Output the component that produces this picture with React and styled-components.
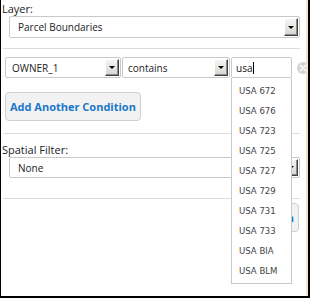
import React from 'react'
import styled, { createGlobalStyle } from 'styled-components'

const GlobalStyle = createGlobalStyle`
    html, body {
        margin: 0;
        padding: 0;
        background: #000;
    }
    body {
        font-family: "Open Sans", "DejaVu Sans", sans-serif;
    }
`

const Frame = styled.div`
    width: 310px;
    height: 298px;
    box-sizing: border-box;
    display: flex;
    border-left: 1px solid #000;
    border-right: 2px solid #000;
    border-bottom: 2px solid #000;
    background: #fff;
    overflow: hidden;
`

const Panel = styled.div`
    flex: 1;
    min-width: 0;
    position: relative;
    padding: 2px 6px 0 1px;
    display: flex;
    flex-direction: column;
    overflow: hidden;
`

const MapStrip = styled.div`
    width: 2px;
    flex-shrink: 0;
    background: linear-gradient(#f4ead0, #f1dcc0 40%, #f5e9d3);
`

const Label = styled.div`
    font-size: 11px;
    line-height: 14px;
    color: #222;
    height: 14px;
    margin-top: ${p => p.$mt || 0}px;
`

const Separator = styled.div`
    height: 1px;
    background: #dcdcdc;
    margin: ${p => p.$mt || 0}px 0 0 1px;
`

const SelectBox = styled.div`
    box-sizing: border-box;
    flex-shrink: 0;
    height: ${p => p.$h || 22}px;
    width: ${p => p.$w ? p.$w + 'px' : 'auto'};
    margin-left: ${p => p.$ml || 0}px;
    border: 1px solid #c9c9c9;
    border-radius: 2px;
    background: #fff;
    display: flex;
    align-items: center;
    padding: 0 1px 0 ${p => p.$pl || 8}px;
    font-size: 10px;
    color: #222;
`

const SelectText = styled.span`
    flex: 1;
    white-space: nowrap;
    overflow: hidden;
`

const ArrowButton = styled.div`
    box-sizing: border-box;
    width: 14px;
    height: calc(100% - 2px);
    background: linear-gradient(#f4f4f4, #d6d6d0);
    border: 1px solid;
    border-color: #fff #404040 #404040 #fff;
    box-shadow: inset -1px -1px 0 #8c8c8c;
    display: flex;
    align-items: center;
    justify-content: center;

    &::after {
        content: '';
        border-left: 3px solid transparent;
        border-right: 3px solid transparent;
        border-top: 3px solid #000;
    }
`

const Row = styled.div`
    display: flex;
    align-items: center;
    margin: ${p => p.$mt || 0}px 0 0 ${p => p.$ml || 0}px;
`

const InputWrap = styled.div`
    position: relative;
    flex-shrink: 0;
    margin-left: 1px;
`

const TextBox = styled.div`
    box-sizing: border-box;
    width: 61px;
    height: 21px;
    border: 1px solid #c9c9c9;
    border-radius: 2px;
    display: flex;
    align-items: center;
    padding-left: 4px;
    font-size: 10px;
    color: #111;
`

const Caret = styled.span`
    display: inline-block;
    width: 1px;
    height: 12px;
    background: #000;
    margin-left: 1px;
`

const ClearIcon = styled.div`
    flex-shrink: 0;
    width: 12px;
    height: 12px;
    border-radius: 50%;
    background: #d3d3d3;
    margin-left: 5px;
    display: flex;
    align-items: center;
    justify-content: center;
`

const Suggestions = styled.ul`
    position: absolute;
    top: 21px;
    left: 0;
    width: 61px;
    box-sizing: border-box;
    margin: 0;
    padding: 3px 0 2px;
    list-style: none;
    background: #fff;
    border: 1px solid #c9c9c9;
    border-top: none;
    z-index: 2;
`

const Suggestion = styled.li`
    height: 20px;
    line-height: 20px;
    padding-left: 7px;
    font-family: "DejaVu Sans Condensed", "DejaVu Sans", sans-serif;
    font-size: 9.5px;
    color: #444;
    white-space: nowrap;
`

const Button = styled.button`
    box-sizing: border-box;
    flex-shrink: 0;
    height: 29px;
    padding: 0 4px;
    border: 1px solid #d0d0d0;
    border-radius: 4px;
    background: #f2f2f2;
    color: #1b76c9;
    font-family: inherit;
    font-weight: bold;
    font-size: 11px;
    cursor: pointer;
`

const ButtonRow = styled.div`
    display: flex;
    justify-content: flex-end;
    margin-top: 4px;
    padding-right: 1px;
`

const items = ['USA 672', 'USA 676', 'USA 723', 'USA 725', 'USA 727', 'USA 729', 'USA 731', 'USA 733', 'USA BIA', 'USA BLM']

function Select({ value, h, w, ml, pl }) {
    return (
        <SelectBox $h={h} $w={w} $ml={ml} $pl={pl}>
            <SelectText>{value}</SelectText>
            <ArrowButton />
        </SelectBox>
    )
}

function App() {
    return (
        <>
            <GlobalStyle />
            <Frame>
                <Panel>
                    <Label>Layer:</Label>
                    <Select value="Parcel Boundaries" ml={7} />
                    <Separator $mt={10} />
                    <Row $mt={8} $ml={3}>
                        <Select value="OWNER_1" w={116} h={21} pl={6} />
                        <Select value="contains" w={108} h={21} ml={1} pl={5} />
                        <InputWrap>
                            <TextBox>usa<Caret /></TextBox>
                            <Suggestions>
                                {items.map(item => (
                                    <Suggestion key={item}>{item}</Suggestion>
                                ))}
                            </Suggestions>
                        </InputWrap>
                        <ClearIcon>
                            <svg width="8" height="8" viewBox="0 0 8 8">
                                <path d="M1.5 1.5 L6.5 6.5 M6.5 1.5 L1.5 6.5" stroke="#fff" strokeWidth="1.6" strokeLinecap="round" />
                            </svg>
                        </ClearIcon>
                    </Row>
                    <Row $mt={14} $ml={3}>
                        <Button>Add Another Condition</Button>
                    </Row>
                    <Separator $mt={12} />
                    <Label $mt={9}>Spatial Filter:</Label>
                    <Select value="None" h={21} ml={7} />
                    <Separator $mt={20} />
                    <ButtonRow>
                        <Button>Run</Button>
                    </ButtonRow>
                </Panel>
                <MapStrip />
            </Frame>
        </>
    )
}

export default App
